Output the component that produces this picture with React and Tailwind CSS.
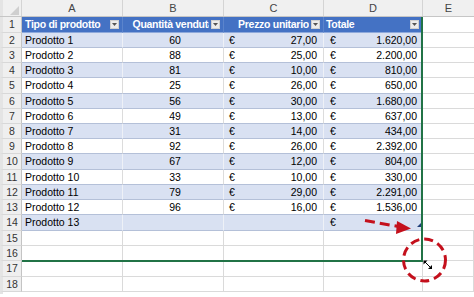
import React from "react";

// row heights in px for rows 1..18 (excel rows are not all the same height here)
const tall = [1, 5, 10, 14, 17];

const products = [
  ["Prodotto 1", "60", "27,00", "1.620,00"],
  ["Prodotto 2", "88", "25,00", "2.200,00"],
  ["Prodotto 3", "81", "10,00", "810,00"],
  ["Prodotto 4", "25", "26,00", "650,00"],
  ["Prodotto 5", "56", "30,00", "1.680,00"],
  ["Prodotto 6", "49", "13,00", "637,00"],
  ["Prodotto 7", "31", "14,00", "434,00"],
  ["Prodotto 8", "92", "26,00", "2.392,00"],
  ["Prodotto 9", "67", "12,00", "804,00"],
  ["Prodotto 10", "33", "10,00", "330,00"],
  ["Prodotto 11", "79", "29,00", "2.291,00"],
  ["Prodotto 12", "96", "16,00", "1.536,00"],
  ["Prodotto 13", "", "", ""],
];

function FilterButton() {
  // blue backing hides the clipped end of long header labels
  return (
    <span className="absolute right-0 top-0 bottom-0 pl-[2px] pr-[3px] bg-[#4472c4] flex items-center">
      <span className="w-[9px] h-[9px] bg-[#ececec] border border-[#d0d0d0] flex items-center justify-center">
        <svg width="5" height="3" viewBox="0 0 5 3">
          <path d="M0 0h5L2.5 3z" fill="#555" />
        </svg>
      </span>
    </span>
  );
}

function RowHeader({ n }) {
  return (
    <div className="w-[22px] shrink-0 border-l-[3px] border-l-[#e4e4e4] border-r border-r-[#c4c4c4] border-b border-b-[#d8d8d8] bg-[#efefef] text-[#333] flex items-center justify-center">
      {n}
    </div>
  );
}

function HeaderRow() {
  const cols = [
    { label: "Tipo di prodotto", w: "w-[101px]", align: "justify-start pl-[3px]" },
    { label: "Quantità venduta", w: "w-[101px]", align: "justify-center" },
    { label: "Prezzo unitario", w: "w-[100px]", align: "justify-center" },
    { label: "Totale", w: "w-[99px]", align: "justify-start pl-[2px]" },
  ];
  return (
    <div className="flex h-[16px]">
      <RowHeader n={1} />
      {cols.map((c) => (
        <div
          key={c.label}
          className={`relative ${c.w} shrink-0 bg-[#4472c4] border-r border-r-[#5b84cc] border-b border-b-[#8ea9db] flex items-center overflow-hidden ${c.align}`}
        >
          <span className="whitespace-nowrap font-bold text-white tracking-[-0.3px]">
            {c.label}
          </span>
          <FilterButton />
        </div>
      ))}
      <div className="w-[51px] shrink-0 border-b border-b-[#dadada]" />
    </div>
  );
}

function DataRow({ n, item }) {
  const banded = n % 2 === 0;
  const h = tall.includes(n) ? "h-[16px]" : "h-[15px]";
  const cell = banded
    ? "bg-[#d9e1f2] border-r border-r-[#eef1f7] border-b border-b-[#b4c0d8]"
    : "bg-white border-r border-r-[#dcdcdc] border-b border-b-[#b4c0d8]";
  const [name, qty, price, total] = item;
  return (
    <div className={`flex ${h}`}>
      <RowHeader n={n} />
      <div className={`w-[101px] shrink-0 flex items-center pl-[3px] ${cell}`}>{name}</div>
      <div className={`w-[101px] shrink-0 flex items-center justify-center pl-[4px] ${cell}`}>{qty}</div>
      <div className={`w-[100px] shrink-0 flex items-center justify-between pl-[5px] pr-[6px] ${cell}`}>
        <span>{price ? "€" : ""}</span>
        <span>{price}</span>
      </div>
      <div className={`w-[99px] shrink-0 flex items-center justify-between pl-[6px] pr-[5px] ${cell}`}>
        <span>€</span>
        <span>{total}</span>
      </div>
      <div className="w-[51px] shrink-0 border-b border-b-[#dadada]" />
    </div>
  );
}

function EmptyRow({ n }) {
  const h = tall.includes(n) ? "h-[16px]" : "h-[15px]";
  const cell = "shrink-0 border-r border-r-[#dadada] border-b border-b-[#dadada]";
  return (
    <div className={`flex ${h}`}>
      <RowHeader n={n} />
      <div className={`w-[101px] ${cell}`} />
      <div className={`w-[101px] ${cell}`} />
      <div className={`w-[100px] ${cell}`} />
      <div className={`w-[99px] ${cell}`} />
      <div className={`w-[51px] ${cell}`} />
    </div>
  );
}

export default function App() {
  return (
    <div className="relative w-[474px] h-[297px] overflow-hidden bg-white text-[10.5px] leading-none text-black font-['Liberation_Sans',Arial,sans-serif]">
      {/* column headers */}
      <div className="flex h-[17px] bg-[#f0f0f0] text-[#444] text-[11px] border-b border-b-[#c6c6c6]">
        <div className="w-[22px] shrink-0 border-l-[3px] border-l-[#e4e4e4] border-r border-r-[#d4d4d4] flex items-end justify-end pr-[2px] pb-[1px]">
          <svg width="9" height="9" viewBox="0 0 9 9">
            <path d="M9 0V9H0z" fill="#cfcfcf" />
          </svg>
        </div>
        {["A", "B", "C", "D"].map((l, i) => (
          <div
            key={l}
            className={`${i === 3 ? "w-[99px]" : i === 2 ? "w-[100px]" : "w-[101px]"} shrink-0 border-r border-r-[#d4d4d4] flex items-center justify-center`}
          >
            {l}
          </div>
        ))}
        <div className="w-[51px] shrink-0 flex items-center justify-center">E</div>
      </div>

      <HeaderRow />
      {products.map((p, i) => (
        <DataRow key={i} n={i + 2} item={p} />
      ))}
      {[15, 16, 17, 18].map((n) => (
        <EmptyRow key={n} n={n} />
      ))}
      <div className="w-[22px] h-[2px] border-l-[3px] border-l-[#e4e4e4]" />

      {/* selection / resize outline */}
      <div className="absolute left-[22px] top-[17px] w-[401px] h-[245px] border-r-2 border-b-2 border-[#217346] pointer-events-none" />

      {/* annotations */}
      <svg className="absolute inset-0 pointer-events-none" width="474" height="297" viewBox="0 0 474 297">
        <path d="M417 227l4 0l0 -4z" fill="#1f3f7a" />
        <path d="M365 220.5L400 226.8" stroke="#c4101c" strokeWidth="3" strokeDasharray="10 5" fill="none" />
        <path d="M397 221L411 228.5L396 234z" fill="#c4101c" />
        <circle cx="424.5" cy="260" r="21" stroke="#c4101c" strokeWidth="3" strokeDasharray="9 5" fill="none" />
        <path d="M424.5 261.5L431 268" stroke="#fff" strokeWidth="2.4" fill="none" />
        <path d="M424.5 261.5L431 268" stroke="#000" strokeWidth="1" />
        <path d="M423.5 260.5h4l-4 4z" fill="#000" />
        <path d="M432 269h-4l4 -4z" fill="#000" />
      </svg>
    </div>
  );
}
